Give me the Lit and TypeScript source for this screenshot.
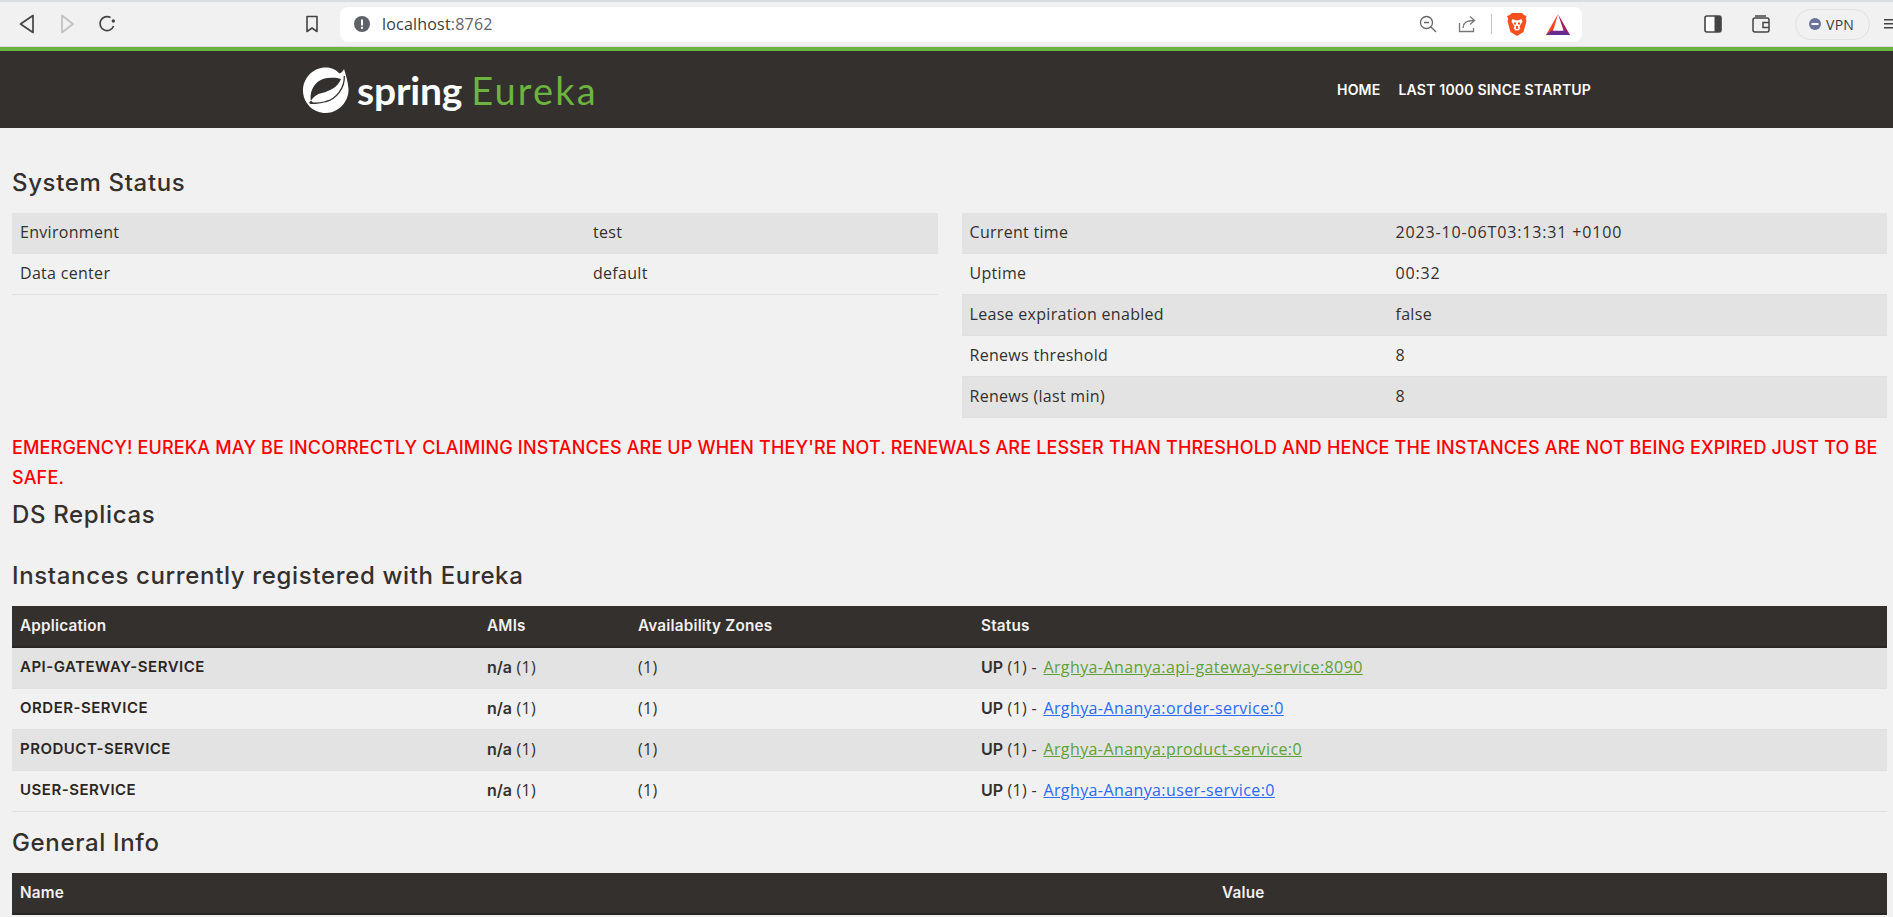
import { LitElement, html, css, svg } from 'lit';
import { customElement } from 'lit/decorators.js';

const instances = [
  { name: 'API-GATEWAY-SERVICE', link: 'Arghya-Ananya:api-gateway-service:8090', visited: true },
  { name: 'ORDER-SERVICE', link: 'Arghya-Ananya:order-service:0', visited: false },
  { name: 'PRODUCT-SERVICE', link: 'Arghya-Ananya:product-service:0', visited: true },
  { name: 'USER-SERVICE', link: 'Arghya-Ananya:user-service:0', visited: false },
];

const leaf = svg`<svg class="leaf" viewBox="0 0 48 48" width="48" height="48">
  <path fill="#fff" d="M42 3C44 9 46 16 46.500 23 47 36 36 47 24 47 11 47 1 37 1 24.500 1 12 11 1.500 24 1.500c6 0 10 2.500 13.500 6 1.500-.5 3.500-2 4.500-4.500z"/>
  <path fill="#34302d" d="M9 35C7 24 14 13 26 12c5-.5 9-.5 13 1-3 8-11 12-19 14-5 1-9 4-11 8z"/>
  <path fill="none" stroke="#34302d" stroke-width="1.300" d="M42.300 10C43 22 34 33 24 35.500c-6 2-11 2-15 1.500"/>
  <circle cx="9" cy="36.500" r="1.600" fill="#34302d"/>
</svg>`;

@customElement('browser-bar')
class BrowserBar extends LitElement {
  static styles = css`
    :host {
      display: flex;
      align-items: center;
      height: 47px;
      box-sizing: border-box;
      background: #f1f1f1;
      border-top: 2px solid #d9dde2;
      border-bottom: 1px solid #dcdcdc;
      padding: 0 0 0 18px;
      overflow: hidden;
      font-family: 'Open Sans', sans-serif;
      color: #5f6368;
    }
    svg { display: block; flex: none; }
    .nav { display: flex; gap: 22px; align-items: center; }
    .bookmark { margin-left: 188px; }
    .address {
      display: flex;
      flex: none;
      align-items: center;
      box-sizing: border-box;
      margin-left: 20px;
      width: 1242px;
      height: 35px;
      background: #fff;
      border-radius: 8px;
      padding: 0 12px 0 14px;
      font-size: 16px;
    }
    .url { margin-left: 12px; color: #3c4043; letter-spacing: 0.2px; }
    .url span { color: #5f6368; }
    .tail { margin-left: auto; display: flex; align-items: center; }
    .share { margin-left: 19px; }
    .divider { width: 1px; height: 20px; background: #c4c4c4; margin: 0 15px 0 14px; }
    .bat { margin-left: 19px; }
    .right { display: flex; align-items: center; margin-left: 122px; flex: none; }
    .wallet { margin-left: 30px; }
    .vpn {
      display: flex;
      align-items: center;
      gap: 5px;
      box-sizing: border-box;
      width: 75px;
      height: 31px;
      margin-left: 25px;
      padding-left: 13px;
      border: 1px solid #e0e0e0;
      border-radius: 16px;
      font-size: 14px;
      color: #3c4043;
    }
    .burger { margin-left: 14px; }
  `;

  render() {
    return html`
      <div class="nav">
        <svg width="18" height="20" viewBox="0 0 18 20" fill="none" stroke="#444" stroke-width="1.700" stroke-linejoin="round"><path d="M15 1.500v17L2.500 10z"/></svg>
        <svg width="18" height="20" viewBox="0 0 18 20" fill="none" stroke="#c0c0c0" stroke-width="1.700" stroke-linejoin="round"><path d="M4 1.500v17L15 10z"/></svg>
        <svg width="18" height="20" viewBox="0 0 18 20" fill="none" stroke="#444" stroke-width="1.700"><path d="M15.600 12A7 7 0 1 1 12.500 3.500"/><circle cx="15.300" cy="7" r="1.700" fill="#444" stroke="none"/></svg>
      </div>
      <svg class="bookmark" width="16" height="20" viewBox="0 0 16 20" fill="none" stroke="#444" stroke-width="1.600" stroke-linejoin="round"><path d="M3 2.500h10v15l-5-3.500-5 3.500z"/></svg>
      <div class="address">
        <svg width="16" height="16" viewBox="0 0 16 16"><circle cx="8" cy="8" r="8" fill="#5f6368"/><rect x="7" y="3.500" width="2" height="6" fill="#fff"/><rect x="7" y="10.800" width="2" height="2" fill="#fff"/></svg>
        <div class="url">localhost<span>:8762</span></div>
        <div class="tail">
          <svg width="20" height="20" viewBox="0 0 20 20" fill="none" stroke="#666" stroke-width="1.300"><circle cx="8.500" cy="8.500" r="6"/><path d="M13 13l5 5M6 8.500h5"/></svg>
          <svg class="share" width="20" height="20" viewBox="0 0 20 20" fill="none" stroke="#777" stroke-width="1.300"><path d="M2.500 9v8.500h14V14"/><path d="M6 14c0-5 3-7.500 11-7.500M13 2.500l4.500 4-4.500 4"/></svg>
          <div class="divider"></div>
          <svg width="20" height="23" viewBox="0 0 20 23"><path fill="#f4511e" d="M5 0h10l2 2 2.500 1-.7 3 .7 2-3 11-6.500 4-6.500-4-3-11 .7-2L0 3l2.500-1z"/><path fill="#fff" d="M5.500 6l3 1.200h3l3-1.200 1 2.500-3 5 .8 2-2.300 2.200-1-.7-1 .7-2.300-2.200.8-2-3-5z"/><path fill="#f4511e" d="M7 9.500h2v2H7zM11 9.500h2v2h-2zM9 13h2v3H9z"/></svg>
          <svg class="bat" width="24" height="21" viewBox="0 0 24 21"><path fill="#ff4724" d="M12 0 0 21h6z"/><path fill="#9e1f63" d="M12 0l12 21h-5z"/><path fill="#662d91" d="M0 21l5-4.500h14l5 4.500z"/><path fill="#fff" d="M12 8 7 16.500h10z"/></svg>
        </div>
      </div>
      <div class="right">
        <svg width="18" height="18" viewBox="0 0 18 18"><rect x="1" y="1" width="16" height="16" rx="2" fill="#fff" stroke="#444" stroke-width="1.600"/><rect x="10.500" y="1" width="6.500" height="16" fill="#444"/></svg>
        <svg class="wallet" width="18" height="18" viewBox="0 0 18 18" fill="none" stroke="#444" stroke-width="1.500"><rect x="1" y="3" width="16" height="14" rx="2"/><path d="M3 1h11"/><path d="M17 7.500h-6v5h6"/></svg>
        <div class="vpn">
          <svg width="12" height="12" viewBox="0 0 12 12"><circle cx="6" cy="6" r="6" fill="#6b7399"/><rect x="2.500" y="5" width="7" height="2" fill="#fff"/></svg>
          VPN
        </div>
        <svg class="burger" width="12" height="14" viewBox="0 0 12 14" fill="#444"><rect y="2" width="12" height="1.500"/><rect y="6" width="12" height="1.500"/><rect y="10" width="12" height="1.500"/></svg>
      </div>
    `;
  }
}

@customElement('app-root')
export class AppRoot extends LitElement {
  static styles = css`
    :host {
      display: block;
      height: 917px;
      overflow: hidden;
      background: #f1f1f1;
      color: #34302d;
      font-family: 'Open Sans', sans-serif;
      font-size: 16px;
      letter-spacing: 0.3px;
    }
    .green { height: 4px; background: #6db33f; }
    .navbar {
      display: flex;
      align-items: center;
      height: 77px;
      background: #34302d;
      padding-left: 302px;
      letter-spacing: normal;
    }
    .brand { display: flex; align-items: center; }
    .leaf { display: block; flex: none; }
    .spring {
      margin-left: 7px;
      color: #fff;
      font-family: Lato, sans-serif;
      font-size: 39px;
      font-weight: 700;
      letter-spacing: -0.2px;
    }
    .eureka {
      margin-left: 9px;
      color: #6db33f;
      font-family: Lato, sans-serif;
      font-size: 38px;
      font-weight: 400;
      letter-spacing: 2.200px;
    }
    .links {
      display: flex;
      gap: 18px;
      margin-left: 739px;
      color: #fff;
      font-family: Inter, sans-serif;
      font-size: 14.100px;
      font-weight: 600;
      letter-spacing: 0.15px;
    }
    main { padding: 40px 6px 0 12px; }
    h2 {
      margin: 0;
      font-family: Inter, sans-serif;
      font-size: 24px;
      font-weight: 500;
      line-height: 30px;
      letter-spacing: 0.65px;
    }
    .status { margin-top: 15px; display: flex; gap: 24px; align-items: flex-start; }
    .status > table { flex: 1; }
    table { width: 100%; border-collapse: separate; border-spacing: 0; table-layout: fixed; }
    td, th { height: 41px; box-sizing: border-box; padding: 0 8px 2px; text-align: left; }
    td { border-bottom: 1px solid #e0e0e0; }
    tbody tr:nth-child(odd) td { background: #e3e3e3; }
    th {
      height: 42px;
      background: #34302d;
      color: #f1f1f1;
      font-family: Inter, sans-serif;
      font-size: 15.300px;
      font-weight: 600;
      letter-spacing: 0.2px;
      border-bottom: 2px solid #2a2623;
    }
    .env-label { width: 573px; }
    .info-label { width: 426px; }
    .num { letter-spacing: 0.85px; }
    .alert {
      margin: 15px 0 7px;
      color: #f00;
      font-family: Inter, sans-serif;
      font-size: 18px;
      line-height: 30px;
      font-weight: 500;
      letter-spacing: 0.16px;
    }
    .instances { margin-top: 31px; }
    .instances-table { margin-top: 15px; }
    .instances-table td { padding-bottom: 3px; }
    .c-app { width: 467px; }
    .c-ami { width: 151px; }
    .c-zone { width: 343px; }
    .app { font-family: Inter, sans-serif; font-weight: 600; font-size: 15px; letter-spacing: 0.5px; color: #2a2623; }
    b { font-family: Inter, sans-serif; font-weight: 600; letter-spacing: 0; }
    a { margin-left: 2px; color: #2a6cf5; letter-spacing: 0.4px; }
    a.visited { color: #5fa134; }
    .general { margin-top: 16px; }
    .general-table { margin-top: 15px; }
    .c-name { width: 1202px; }
  `;

  render() {
    return html`
      <browser-bar></browser-bar>
      <div class="green"></div>
      <header class="navbar">
        <div class="brand">
          ${leaf}
          <span class="spring">spring</span>
          <span class="eureka">Eureka</span>
        </div>
        <div class="links"><span>HOME</span><span>LAST 1000 SINCE STARTUP</span></div>
      </header>
      <main>
        <h2>System Status</h2>
        <div class="status">
          <table>
            <colgroup><col class="env-label" /><col /></colgroup>
            <tbody>
              <tr><td>Environment</td><td>test</td></tr>
              <tr><td>Data center</td><td>default</td></tr>
            </tbody>
          </table>
          <table>
            <colgroup><col class="info-label" /><col /></colgroup>
            <tbody>
              <tr><td>Current time</td><td class="num">2023-10-06T03:13:31 +0100</td></tr>
              <tr><td>Uptime</td><td class="num">00:32</td></tr>
              <tr><td>Lease expiration enabled</td><td>false</td></tr>
              <tr><td>Renews threshold</td><td>8</td></tr>
              <tr><td>Renews (last min)</td><td>8</td></tr>
            </tbody>
          </table>
        </div>
        <div class="alert">EMERGENCY! EUREKA MAY BE INCORRECTLY CLAIMING INSTANCES ARE UP WHEN THEY'RE NOT. RENEWALS ARE LESSER THAN THRESHOLD AND HENCE THE INSTANCES ARE NOT BEING EXPIRED JUST TO BE SAFE.</div>
        <h2>DS Replicas</h2>
        <h2 class="instances">Instances currently registered with Eureka</h2>
        <table class="instances-table">
          <colgroup><col class="c-app" /><col class="c-ami" /><col class="c-zone" /><col /></colgroup>
          <thead><tr><th>Application</th><th>AMIs</th><th>Availability Zones</th><th>Status</th></tr></thead>
          <tbody>
            ${instances.map(
              (i) => html`<tr>
                <td class="app">${i.name}</td>
                <td><b>n/a</b> (1)</td>
                <td>(1)</td>
                <td><b>UP</b> (1) - <a class=${i.visited ? 'visited' : ''} href="#">${i.link}</a></td>
              </tr>`
            )}
          </tbody>
        </table>
        <h2 class="general">General Info</h2>
        <table class="general-table">
          <colgroup><col class="c-name" /><col /></colgroup>
          <thead><tr><th>Name</th><th>Value</th></tr></thead>
        </table>
      </main>
    `;
  }
}
